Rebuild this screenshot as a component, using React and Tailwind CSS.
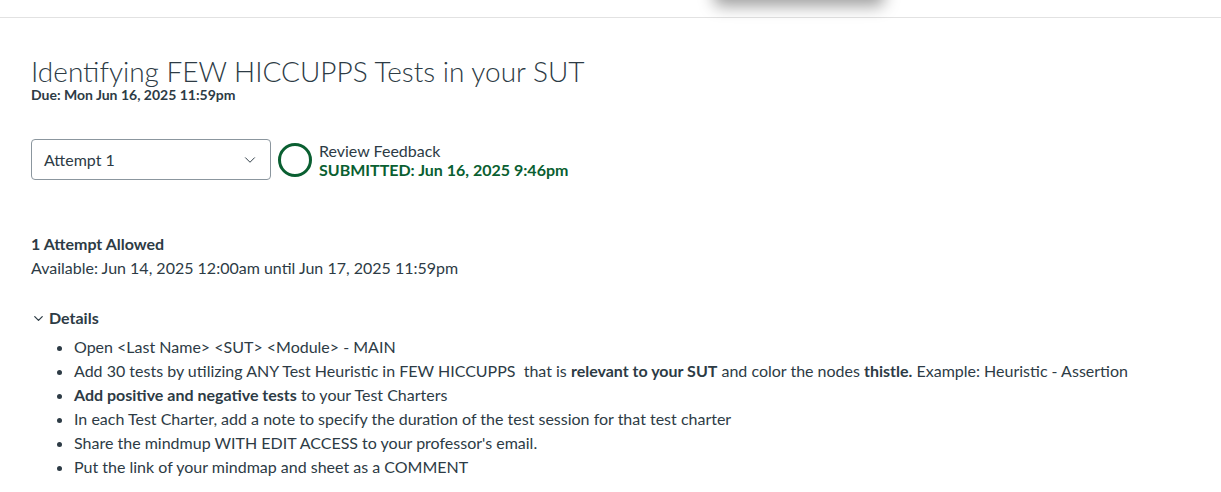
import { ChevronDown } from "lucide-react";

const bullets = [
  <>Open &lt;Last Name&gt; &lt;SUT&gt; &lt;Module&gt; - MAIN</>,
  <>
    Add 30 tests by utilizing ANY Test Heuristic in FEW HICCUPPS&nbsp; that is{" "}
    <b>relevant to your SUT</b> and color the nodes <b>thistle.</b> Example: Heuristic - Assertion
  </>,
  <>
    <b>Add positive and negative tests</b> to your Test Charters
  </>,
  <>In each Test Charter, add a note to specify the duration of the test session for that test charter</>,
  <>Share the mindmup WITH EDIT ACCESS to your professor's email.</>,
  <>Put the link of your mindmap and sheet as a COMMENT</>,
];

export default function App() {
  return (
    <div className="relative w-[1221px] h-[492px] overflow-hidden bg-white text-[#2d3b45] font-['Lato','Liberation_Sans',sans-serif]">
      {/* shadow of a menu above the fold */}
      <div className="absolute left-[714px] top-[-40px] w-[170px] h-[40px] rounded-md bg-white shadow-[0_6px_16px_rgba(0,0,0,0.38)]" />
      <div className="h-[18px] border-b border-[#e2e2e2]" />

      <div className="pl-[31px] pt-[38px]">
        <h1 className="text-[28px] font-light leading-[31px]">
          Identifying FEW HICCUPPS Tests in your SUT
        </h1>
        <div className="text-[14px] font-bold leading-[15px]">
          Due: Mon Jun 16, 2025 11:59pm
        </div>

        <div className="flex items-center mt-[37px]">
          <div className="w-[240px] h-[41px] border border-[#8b969e] rounded-[4px] flex items-center justify-between pl-[12px] pr-[11px]">
            <span className="text-[16px]">Attempt 1</span>
            <ChevronDown size={18} strokeWidth={1.3} className="text-[#2d3b45]" />
          </div>
          <div className="ml-[7px] w-[34px] h-[34px] rounded-full border-[3px] border-[#0a5f31]" />
          <div className="ml-[7px] flex flex-col leading-[19px]">
            <span className="text-[16px]">Review Feedback</span>
            <span className="text-[16px] font-bold text-[#0a5f31]">
              SUBMITTED: Jun 16, 2025 9:46pm
            </span>
          </div>
        </div>

        <div className="mt-[52px] text-[16px] leading-[24px]">
          <div className="font-bold">1 Attempt Allowed</div>
          <div>Available: Jun 14, 2025 12:00am until Jun 17, 2025 11:59pm</div>
        </div>

        <div className="mt-[26px] flex items-center gap-[3px] text-[16px] font-bold leading-[24px]">
          <ChevronDown size={15} strokeWidth={2} />
          <span>Details</span>
        </div>

        <ul className="mt-[5px] list-disc pl-[43px] text-[16px] leading-[24px]">
          {bullets.map((b, i) => (
            <li key={i}>{b}</li>
          ))}
        </ul>
      </div>
    </div>
  );
}
